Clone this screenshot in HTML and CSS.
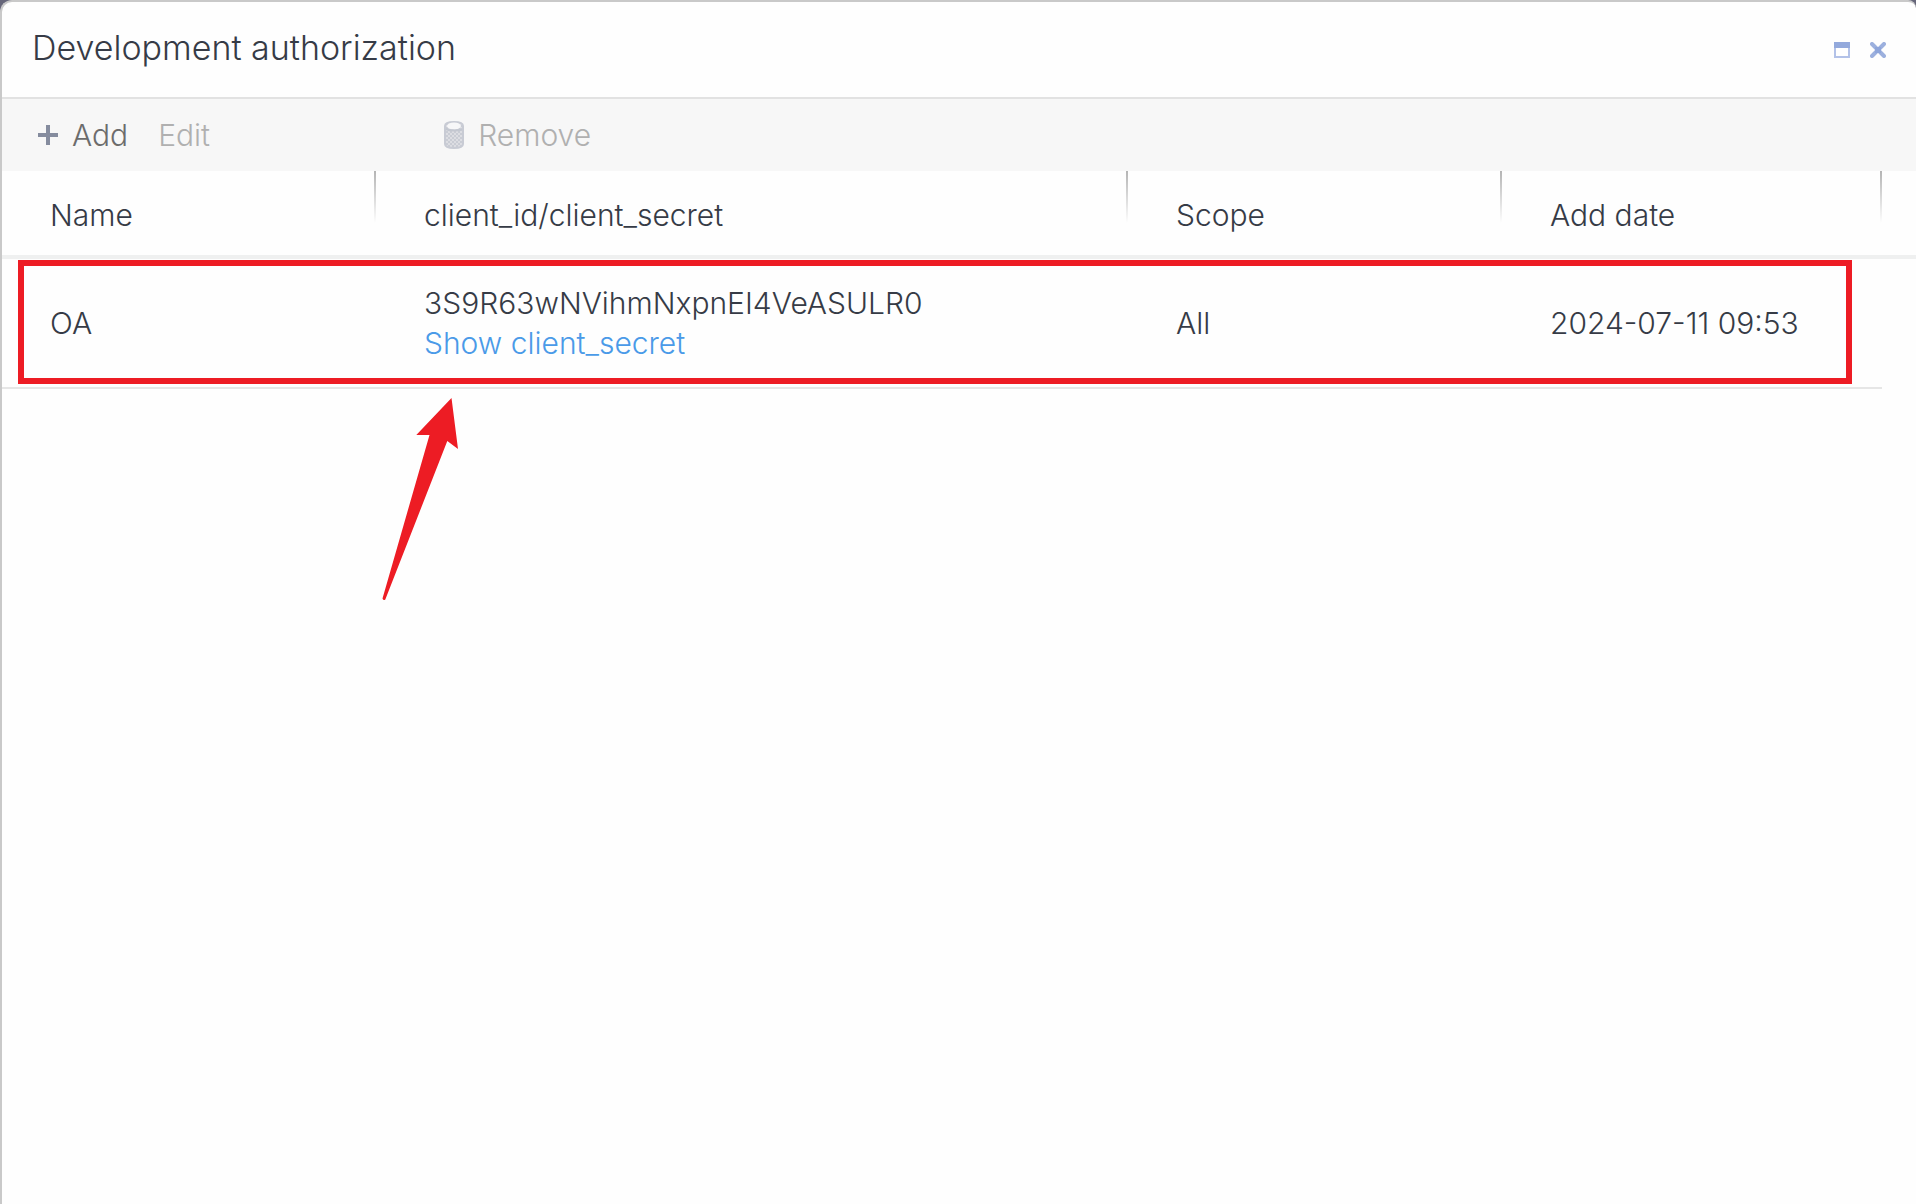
FILE: index.html
```html
<!DOCTYPE html>
<html lang="en">
<head>
<meta charset="utf-8">
<title>Development authorization</title>
<link rel="stylesheet" href="styles.css">
</head>
<body>
<main class="window">
  <header class="titlebar">
    <h1 class="title">Development authorization</h1>
    <div class="window-actions">
      <button class="icon-button" type="button" aria-label="Maximize">
        <svg width="16" height="16" viewBox="0 0 16 16"><path d="M1 1h14v14H1z" fill="#fff" stroke="#b3c2e8" stroke-width="2"/><path d="M0 0h16v6H0z" fill="#93a9dc"/></svg>
      </button>
      <button class="icon-button" type="button" aria-label="Close">
        <svg width="16" height="16" viewBox="0 0 16 16"><path d="M2 2l12 12M14 2L2 14" stroke="#9cb0de" stroke-width="4" stroke-linecap="round"/><path d="M5 5h6v6H5z" fill="#8ea5da"/></svg>
      </button>
    </div>
  </header>

  <div class="toolbar">
    <button class="tool" type="button">
      <svg width="20" height="20" viewBox="0 0 20 20"><path d="M10 0v20M0 10h20" stroke="#858c9e" stroke-width="4"/></svg>
      Add
    </button>
    <button class="tool tool-edit" type="button" disabled>Edit</button>
    <button class="tool" type="button" disabled>
      <svg width="20" height="28" viewBox="0 0 20 28">
        <defs><pattern id="mesh" width="4" height="4" patternUnits="userSpaceOnUse"><path d="M0 0h4v4H0z" fill="#dcdde2"/><path d="M0 0h2v2H0zM2 2h2v2H2z" fill="#c9ccd4"/></pattern></defs>
        <path d="M1 5C1 2 4 1 10 1s9 1 9 4v18c0 3-3 4-9 4S1 26 1 23z" fill="url(#mesh)" stroke="#c8cbd4" stroke-width="2"/>
        <ellipse cx="10" cy="5" rx="7" ry="3.500" fill="#f7f7f8"/>
        <path d="M2 8c4 2 12 2 16 0" fill="none" stroke="#c3c7d0" stroke-width="2"/>
      </svg>
      Remove
    </button>
  </div>

  <table class="grid">
    <colgroup><col class="col-name"><col class="col-client"><col class="col-scope"><col><col class="col-gutter"></colgroup>
    <thead>
      <tr><th scope="col">Name</th><th scope="col">client_id/client_secret</th><th scope="col">Scope</th><th scope="col">Add date</th><td></td></tr>
    </thead>
    <tbody>
      <tr>
        <td>OA</td>
        <td>3S9R63wNVihmNxpnEI4VeASULR0<br><a class="link" href="#secret">Show client_secret</a></td>
        <td>All</td>
        <td>2024-07-11 09:53</td>
      </tr>
    </tbody>
  </table>

  <div class="callout-box"></div>
  <svg class="callout-arrow" width="76" height="204" viewBox="0 0 76 204" aria-hidden="true"><path d="M69.500 0L76 51 65.300 43 3.300 201.500Q1.500 203 0.500 200.500L47.500 37H34.300z" fill="#ed1c24"/></svg>
</main>
</body>
</html>
```

FILE: styles.css
```css
* {
  box-sizing: border-box;
}

body {
  margin: 0;
  background: #66667a;
  color: #363b46;
  font: 300 30px/40px Inter, "Liberation Sans", sans-serif;
}

button {
  border: 0;
  padding: 0;
  background: none;
  font: inherit;
}

svg {
  display: block;
}

.window {
  position: relative;
  min-height: 100vh;
  border: solid #c9c9c9;
  border-width: 2px 0 0 2px;
  border-radius: 12px 8px 0 0;
  background: #fefefe;
}

.titlebar {
  display: flex;
  align-items: center;
  justify-content: space-between;
  height: 97px;
  padding: 0 30px;
  border-bottom: 2px solid #e2e2e2;
}

.title {
  margin: 0;
  padding-bottom: 4px;
  font-size: 34px;
  font-weight: 300;
}

.window-actions {
  display: flex;
  gap: 20px;
}

.toolbar {
  display: flex;
  align-items: center;
  height: 72px;
  padding: 0 36px;
  background: #f7f7f7;
}

.tool {
  display: flex;
  align-items: center;
  gap: 14px;
  color: #6c6c6c;
}

.tool:disabled {
  color: #b0b0b0;
}

.tool-edit {
  width: 286px;
  margin-left: 30px;
}

.grid {
  width: 100%;
  table-layout: fixed;
  border-collapse: separate;
  border-spacing: 0;
}

.col-name,
.col-scope {
  width: 374px;
}

.col-client {
  width: 752px;
}

.col-gutter {
  width: 34px;
}

.grid th,
.grid td {
  padding: 0 0 0 48px;
  text-align: left;
  font-weight: 300;
}

.grid thead th,
.grid thead td {
  height: 88px;
  padding-top: 4px;
  border-bottom: 4px solid #eff0f0;
}

.grid th {
  background: linear-gradient(#b4b4b4, #fefefe) right top / 2px 52px no-repeat;
}

.grid tbody td {
  height: 130px;
  border-bottom: 2px solid #e6e6e6;
}

.link {
  color: #4a9ae8;
  text-decoration: none;
}

/* Highlight drawn over the first row */
.callout-box {
  position: absolute;
  top: 258px;
  left: 16px;
  right: 64px;
  height: 124px;
  border: 6px solid #ed1c24;
  pointer-events: none;
}

.callout-arrow {
  position: absolute;
  top: 396px;
  left: 380px;
}
```
